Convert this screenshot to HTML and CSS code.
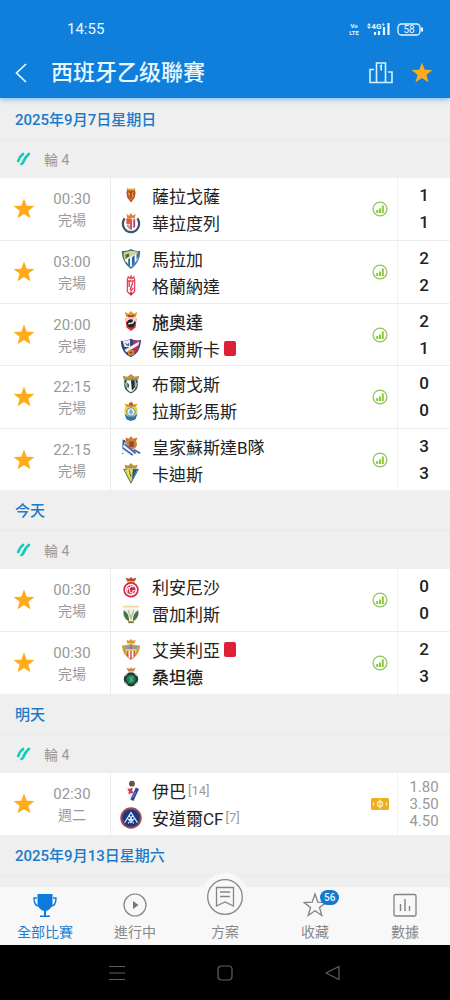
FILE: index.html
```html
<!DOCTYPE html>
<html lang="zh-Hant">
<head>
<meta charset="utf-8">
<meta name="viewport" content="width=device-width, initial-scale=1">
<title>西班牙乙级聯賽</title>
<link rel="stylesheet" href="styles.css">
</head>
<body>
<svg class="sprite" aria-hidden="true">
  <symbol id="star" viewBox="0 0 22 22"><path d="M11 .5l2.700 7.200 7.800.3-6.100 4.800 2.100 7.500-6.500-4.300-6.500 4.300 2.100-7.500L.5 8l7.800-.3z" fill="#ffab19"/></symbol>
  <symbol id="league" viewBox="0 0 16 14"><path d="M7 2C5 3.500 3 6 2.200 9" fill="none" stroke="#17c9b8" stroke-width="2.800" stroke-linecap="round"/><path d="M12.800 2C10.500 4 8.500 7 7.500 9.500 7 11 6.500 11.800 5.500 12" fill="none" stroke="#17c9b8" stroke-width="2.800" stroke-linecap="round"/></symbol>
  <symbol id="stats" viewBox="0 0 16 16"><circle cx="8" cy="8" r="6.900" fill="none" stroke="#8fc653" stroke-width="1.300"/><path d="M5.200 12V9M8 12V7.500M10.800 12V4.500" stroke="#8ac840" stroke-width="2"/></symbol>
  <symbol id="c-zaragoza" viewBox="0 0 24 24"><path d="M9 5h6l1-2 1 6-1 5-4 5-4-5-1-5 1-6z" fill="#c34c25"/><path d="M8 4h8v2H8z" fill="#e2a52a"/><path d="M9 8l3 1 3-2-1 3 1 2-3 5-2-3 1-2-2-1z" fill="#dba02d"/><path d="M12 8v7" stroke="#712c22" stroke-width="1.300"/></symbol>
  <symbol id="c-valladolid" viewBox="0 0 24 24"><path d="M5 7c-5 8 1 15 7 15s12-7 7-15" fill="none" stroke="#3d5665" stroke-width="2.400"/><path d="M7 2l3 2 2-3 2 3 3-2-1 5H8z" fill="#da812d"/><path d="M6.500 7h11v6c0 4-3 6-5.500 7-2.500-1-5.500-3-5.500-7z" fill="#f2e9ed"/><path d="M12 8v11M15.500 8v9" stroke="#a63d86" stroke-width="1.800"/><path d="M7 7h5v6H7z" fill="#e45642"/><path d="M8 14l3 4" stroke="#dd8a3a" stroke-width="2"/></symbol>
  <symbol id="c-malaga" viewBox="0 0 24 24"><path d="M2 3q5 1 10-2 5 3 10 2c0 10-4 15-10 20C6 18 2 13 2 3z" fill="#3c7280"/><path d="M4 5l8-2 8 1-14 11c-2-4-2-7-2-10z" fill="#d6d58a"/><path d="M5 13L20 5l-1 8-7 8z" fill="#fff"/><path d="M9 12v6l2 2v-9zM13 10v10l3-4V8zM18 7v7l2-6V5z" fill="#2468ad"/><path d="M6 7l4-1v3l-4 3z" fill="#526b42"/></symbol>
  <symbol id="c-granada" viewBox="0 0 24 24"><path d="M8 5l1-3 2 2 1-3 1 3 2-2 1 3v13l-4 4-4-4z" fill="#fff" stroke="#df3e51" stroke-width="1.300"/><path d="M8 6.500h8M10 7v6M14 8l-3 8M14.500 14l-3 4" stroke="#df3e51" stroke-width="1.500"/><circle cx="12" cy="20" r="1.500" fill="#c23b49"/></symbol>
  <symbol id="c-ceuta" viewBox="0 0 24 24"><path d="M7 8L5 2l4 2 3-3 3 3 4-2-2 6z" fill="#d6a02c"/><path d="M8 5l4 1 4-1-1 3H9z" fill="#be3e31"/><path d="M6 9h12l-1 10-5 4-5-4z" fill="#d72f38"/><path d="M6.500 9h11l-.5 4H7z" fill="#f5eeee"/><circle cx="12" cy="14.500" r="4.500" fill="#242328"/><path d="M9 15l5-1 1-3" fill="none" stroke="#f4eeee" stroke-width="1.500"/></symbol>
  <symbol id="c-huesca" viewBox="0 0 24 24"><path d="M1 4c6 1 8-1 11-2 4 2 7 3 11 1-1 12-5 16-11 19C5 19 1 13 1 4z" fill="#304482"/><path d="M14 3c3 1 6 1 8 .5-1 8-3 12-7 15z" fill="#b83251"/><path d="M3 5l8-2v8H5z" fill="#eef0f6"/><path d="M5 14L21 5l-1 4L7 17z" fill="#f0f1f8"/><path d="M5 6l3 2 2-2v4l-3-1z" fill="#596681"/><circle cx="12" cy="17" r="3.500" fill="#da8e2c"/><path d="M10 17h4M12 15v4" stroke="#994029"/></symbol>
  <symbol id="c-burgos" viewBox="0 0 24 24"><path d="M4 7L3 3l5 1 4-3 4 3 5-1-1 4z" fill="#b89548"/><path d="M5 7h14c2 8-1 13-7 15C6 20 3 15 5 7z" fill="#215245"/><path d="M7 8h10v7c0 3-3 5-5 6-2-1-5-3-5-6z" fill="#f7f8f4"/><path d="M12 8h4v8l-3 3z" fill="#242c2a"/><path d="M8 10l2 3-1 4-1-2z" fill="#364543"/><path d="M4 10l2 2-1 4M20 10l-2 2 1 4" fill="none" stroke="#9cae93" stroke-width="1.500"/></symbol>
  <symbol id="c-palmas" viewBox="0 0 24 24"><path d="M7 8L5 4l5 1 2-4 2 4 5-1-2 4z" fill="#dc9b26"/><path d="M10 3h4v3h-4z" fill="#b84f35"/><path d="M5 8h14v7l-3 7H8l-3-7z" fill="#f4cd45"/><circle cx="12" cy="13" r="4.500" fill="#eff7fa" stroke="#3285c3"/><path d="M5 15l4 3h6l4-3-2 6-5 2-5-2z" fill="#2774b9"/><path d="M10 12h4M9.500 14h5M12 10v6" stroke="#5890b1"/></symbol>
  <symbol id="c-sociedad" viewBox="0 0 24 24"><path d="M7 8L6 3l4 1 2-3 2 3 5-1-2 5z" fill="#c96b26"/><circle cx="12.500" cy="10" r="6" fill="#c88535"/><path d="M10 7h5v6h-5z" fill="#9c472f"/><path d="M3 5l3 1 1 12-5 3z" fill="#315392"/><path d="M5 8l8 9 7-3 2 6-9 3-12-4z" fill="#f2f6ff"/><path d="M5 10l12 10M3 14l11 8M15 16l7 4" stroke="#405eaa" stroke-width="1.800"/></symbol>
  <symbol id="c-cadiz" viewBox="0 0 24 24"><path d="M6 7l-1-4 4 1 3-3 3 3 4-1-1 4z" fill="#bd912f"/><path d="M4 8h16l-8 15z" fill="#f5d32c" stroke="#28688d"/><path d="M14 8h5l-6 12z" fill="#185895"/><path d="M7 8h7l-3 8z" fill="#f8e564"/><path d="M10 9l2 7" stroke="#5d773d" stroke-width="1.300"/></symbol>
  <symbol id="c-leonesa" viewBox="0 0 24 24"><path d="M8 6L6 2l4 1 2-2 2 2 4-1-2 4z" fill="#b9492d"/><path d="M8 6h8v2H8z" fill="#e4bd42"/><circle cx="12" cy="15" r="7.500" fill="#fff" stroke="#d42749" stroke-width="1.800"/><circle cx="12" cy="15" r="5" fill="#d32848"/><path d="M15 12l-3-1-2 3 1 4 3 1v-3h3M10 12l-2 2v3" fill="none" stroke="#fff" stroke-width="1.100"/></symbol>
  <symbol id="c-leganes" viewBox="0 0 24 24"><path d="M3 3h18v2H3z" fill="#f0d8a4"/><path d="M4 6h16l-3 13-5 3-5-3z" fill="#f2f2dd"/><path d="M4 8c4 2 6 6 6 12-4-2-7-5-6-12zM20 8c-4 2-6 6-6 12 4-2 7-5 6-12z" fill="#477346"/><path d="M9 8l3 9 3-9" fill="none" stroke="#b5bf96" stroke-width="1.500"/><path d="M9 21h6" stroke="#8c6b32" stroke-width="2"/></symbol>
  <symbol id="c-almeria" viewBox="0 0 24 24"><path d="M8 5L7 1l3 1 2-2 2 2 3-1-1 4z" fill="#db9638"/><path d="M2 7c4 0 7 0 10-2 3 2 6 2 10 2-1 8-4 12-10 16C6 19 3 15 2 7z" fill="#d79b3d"/><path d="M5 8h14l-2 5H7z" fill="#78a3b9"/><path d="M7 13h10l-1 5-4 4-4-4z" fill="#fff"/><path d="M8.500 13v6M12 7v15M15.500 13v6" stroke="#d44a3e" stroke-width="1.600"/><path d="M6 12h12" stroke="#f1ca5b" stroke-width="2"/></symbol>
  <symbol id="c-racing" viewBox="0 0 24 24"><path d="M9 6L7 2l4 1 1-2 1 2 4-1-2 4z" fill="#c8874f"/><circle cx="12" cy="14.500" r="7.800" fill="#273832"/><circle cx="12" cy="14.500" r="5" fill="#188353"/><path d="M5 11l3-3M16 8l3 3M5 18l3 3M19 18l-3 3" stroke="#ced1c4" stroke-width="1.500"/><path d="M10 12l4 5M14 11l-3 7" stroke="#88bda1"/></symbol>
  <symbol id="c-eibar" viewBox="0 0 24 24"><circle cx="13" cy="4" r="3.200" fill="#70503a"/><path d="M6 8l5-1 3 10-1 6-4-7z" fill="#f2eef2"/><path d="M9 10l5 4M13 9l-3 6" stroke="#cc3856" stroke-width="2.300"/><path d="M19 9l-6 13" stroke="#294d91" stroke-width="3.800"/><path d="M17 13l-3 6" stroke="#8194ba"/></symbol>
  <symbol id="c-andorra" viewBox="0 0 24 24"><circle cx="12" cy="12" r="11.700" fill="#a4484a"/><circle cx="12" cy="12" r="9.500" fill="#173a87"/><path d="M5 17l7-11 7 11M9 18l3-5 3 5M8 12l4 5 4-5M10 9l4 6M14 9l-4 6" fill="none" stroke="#e3f3ff" stroke-width="1.200"/></symbol>
</svg>

<header class="header">
  <div class="status">
    <time>14:55</time>
    <div class="status-icons">
      <svg width="11" height="14" viewBox="0 0 11 14"><text class="tiny" x="5" y="6">Vo</text><text class="tiny" x="5" y="13">LTE</text></svg>
      <svg width="25" height="14" viewBox="0 0 25 14"><path d="M3 1L1 3.500h4zM3 7L1 4.500h4z" fill="#e6f8ff"/><text class="tiny net" x="12" y="7">4G⁺</text><path d="M9 13v-3M13 13V9M18 13V5M22.500 13V1" stroke="#e6f8ff" stroke-width="2.200"/></svg>
      <svg width="26" height="13" viewBox="0 0 26 13"><rect x="1" y="1" width="22" height="11" rx="3.500" fill="none" stroke="#e6f8ff" stroke-width="1.300"/><path d="M25 4.500v4" stroke="#e6f8ff" stroke-width="2"/><text class="tiny level" x="12" y="10">58</text></svg>
    </div>
  </div>
  <div class="titlebar">
    <button class="icon-btn back" aria-label="返回"><svg width="12" height="20" viewBox="0 0 12 20"><path d="M11 1L1.500 10 11 19" fill="none" stroke="#e9fbff" stroke-width="1.700"/></svg></button>
    <h1>西班牙乙级聯賽</h1>
    <button class="icon-btn" aria-label="排名"><svg width="24" height="22" viewBox="0 0 24 22"><path d="M7.500 20.500V1h9v19.500M5 7.500H1v13h22V10h-4M11 4.500l1.200-1v5" fill="none" stroke="#d2f4ff" stroke-width="1.600"/></svg></button>
    <button class="icon-btn" aria-label="收藏聯賽"><svg width="22" height="22"><use href="#star"/></svg></button>
  </div>
</header>

<main class="feed">
  <section>
    <h2 class="date">2025年9月7日星期日</h2>
    <div class="round"><svg width="16" height="14"><use href="#league"/></svg>輪 4</div>
    <ul class="matches">
      <li class="match">
        <button class="fav" aria-label="收藏"><svg width="22" height="22"><use href="#star"/></svg></button>
        <div class="when"><span class="clock">00:30</span><span>完場</span></div>
        <div class="teams"><div class="team"><svg class="crest"><use href="#c-zaragoza"/></svg>薩拉戈薩</div><div class="team"><svg class="crest"><use href="#c-valladolid"/></svg>華拉度列</div></div>
        <div class="info"><svg width="16" height="16"><use href="#stats"/></svg></div>
        <div class="score"><span>1</span><span>1</span></div>
      </li>
      <li class="match">
        <button class="fav" aria-label="收藏"><svg width="22" height="22"><use href="#star"/></svg></button>
        <div class="when"><span class="clock">03:00</span><span>完場</span></div>
        <div class="teams"><div class="team"><svg class="crest"><use href="#c-malaga"/></svg>馬拉加</div><div class="team"><svg class="crest"><use href="#c-granada"/></svg>格蘭納達</div></div>
        <div class="info"><svg width="16" height="16"><use href="#stats"/></svg></div>
        <div class="score"><span>2</span><span>2</span></div>
      </li>
      <li class="match">
        <button class="fav" aria-label="收藏"><svg width="22" height="22"><use href="#star"/></svg></button>
        <div class="when"><span class="clock">20:00</span><span>完場</span></div>
        <div class="teams"><div class="team winner"><svg class="crest"><use href="#c-ceuta"/></svg>施奧達</div><div class="team"><svg class="crest"><use href="#c-huesca"/></svg>侯爾斯卡<i class="red-card"></i></div></div>
        <div class="info"><svg width="16" height="16"><use href="#stats"/></svg></div>
        <div class="score"><span>2</span><span>1</span></div>
      </li>
      <li class="match">
        <button class="fav" aria-label="收藏"><svg width="22" height="22"><use href="#star"/></svg></button>
        <div class="when"><span class="clock">22:15</span><span>完場</span></div>
        <div class="teams"><div class="team"><svg class="crest"><use href="#c-burgos"/></svg>布爾戈斯</div><div class="team"><svg class="crest"><use href="#c-palmas"/></svg>拉斯彭馬斯</div></div>
        <div class="info"><svg width="16" height="16"><use href="#stats"/></svg></div>
        <div class="score"><span>0</span><span>0</span></div>
      </li>
      <li class="match">
        <button class="fav" aria-label="收藏"><svg width="22" height="22"><use href="#star"/></svg></button>
        <div class="when"><span class="clock">22:15</span><span>完場</span></div>
        <div class="teams"><div class="team"><svg class="crest"><use href="#c-sociedad"/></svg>皇家蘇斯達B隊</div><div class="team"><svg class="crest"><use href="#c-cadiz"/></svg>卡迪斯</div></div>
        <div class="info"><svg width="16" height="16"><use href="#stats"/></svg></div>
        <div class="score"><span>3</span><span>3</span></div>
      </li>
    </ul>
  </section>
  <section>
    <h2 class="date">今天</h2>
    <div class="round"><svg width="16" height="14"><use href="#league"/></svg>輪 4</div>
    <ul class="matches">
      <li class="match">
        <button class="fav" aria-label="收藏"><svg width="22" height="22"><use href="#star"/></svg></button>
        <div class="when"><span class="clock">00:30</span><span>完場</span></div>
        <div class="teams"><div class="team"><svg class="crest"><use href="#c-leonesa"/></svg>利安尼沙</div><div class="team"><svg class="crest"><use href="#c-leganes"/></svg>雷加利斯</div></div>
        <div class="info"><svg width="16" height="16"><use href="#stats"/></svg></div>
        <div class="score"><span>0</span><span>0</span></div>
      </li>
      <li class="match">
        <button class="fav" aria-label="收藏"><svg width="22" height="22"><use href="#star"/></svg></button>
        <div class="when"><span class="clock">00:30</span><span>完場</span></div>
        <div class="teams"><div class="team"><svg class="crest"><use href="#c-almeria"/></svg>艾美利亞<i class="red-card"></i></div><div class="team winner"><svg class="crest"><use href="#c-racing"/></svg>桑坦德</div></div>
        <div class="info"><svg width="16" height="16"><use href="#stats"/></svg></div>
        <div class="score"><span>2</span><span>3</span></div>
      </li>
    </ul>
  </section>
  <section>
    <h2 class="date">明天</h2>
    <div class="round"><svg width="16" height="14"><use href="#league"/></svg>輪 4</div>
    <ul class="matches">
      <li class="match">
        <button class="fav" aria-label="收藏"><svg width="22" height="22"><use href="#star"/></svg></button>
        <div class="when"><span class="clock">02:30</span><span>週二</span></div>
        <div class="teams"><div class="team"><svg class="crest"><use href="#c-eibar"/></svg>伊巴<small>[14]</small></div><div class="team"><svg class="crest"><use href="#c-andorra"/></svg>安道爾CF<small>[7]</small></div></div>
        <div class="info"><svg width="18" height="12" viewBox="0 0 18 12"><rect width="18" height="12" rx="1.500" fill="#ecae22"/><circle cx="9" cy="6" r="2.600" fill="none" stroke="#fff1bb" stroke-width="1.200"/><path d="M9 1.500v9M2.500 4.500v3M15.500 4.500v3" stroke="#fff1bb" stroke-width="1.200"/></svg></div>
        <div class="odds"><span>1.80</span><span>3.50</span><span>4.50</span></div>
      </li>
    </ul>
  </section>
  <section><h2 class="date">2025年9月13日星期六</h2></section>
</main>

<nav class="tabs">
  <a class="tab active" href="#all"><svg width="24" height="26" viewBox="0 0 24 26"><path d="M4.500 2h15v9c0 4-3 7-6.500 8v4.500h4V25H7v-1.500h4V19c-3.500-1-6.500-4-6.500-8z" fill="#0d7bdc"/><path d="M4 6H1c0 4 1 8 5 8M20 6h3c0 4-1 8-5 8" fill="none" stroke="#0d7bdc" stroke-width="1.400"/></svg><span>全部比賽</span></a>
  <a class="tab" href="#live"><svg width="24" height="26" viewBox="0 0 24 26"><circle cx="12" cy="13" r="11" fill="none" stroke="#828282" stroke-width="1.200"/><path d="M10 9l5.500 4-5.500 4z" fill="#777"/></svg><span>進行中</span></a>
  <a class="tab center" href="#plan"><i class="bump"><svg width="36" height="36" viewBox="0 0 36 36"><circle cx="18" cy="18" r="17.300" fill="none" stroke="#858585" stroke-width="1.300"/><path d="M9.500 8.500h17v18.500l-8.500-4-8.500 4zM13 13h10M13 17.500h10" fill="none" stroke="#858585" stroke-width="1.300"/></svg></i><span>方案</span></a>
  <a class="tab" href="#favorites"><svg width="24" height="26" viewBox="0 0 24 26"><path d="M12 2l2.800 8.200 8.200.3-6.500 5 2.300 8-6.800-4.700-6.800 4.700 2.300-8-6.500-5 8.200-.3z" fill="none" stroke="#828282" stroke-width="1.300"/></svg><b class="badge">56</b><span>收藏</span></a>
  <a class="tab" href="#data"><svg width="24" height="26" viewBox="0 0 24 26"><rect x="1" y="2.500" width="22" height="21.500" rx="1.500" fill="none" stroke="#828282" stroke-width="1.300"/><path d="M7.500 19v-7M12 19V7M16.500 19v-5" stroke="#828282" stroke-width="1.400"/></svg><span>數據</span></a>
</nav>

<footer class="system">
  <button class="icon-btn" aria-label="最近"><svg width="16" height="16" viewBox="0 0 16 16"><path d="M0 1.500h16M0 8h16M0 14.500h16" stroke="#606060" stroke-width="1.200"/></svg></button>
  <button class="icon-btn" aria-label="主頁"><svg width="16" height="16" viewBox="0 0 16 16"><rect x="1" y="1" width="14" height="14" rx="3.500" fill="none" stroke="#606060" stroke-width="1.200"/></svg></button>
  <button class="icon-btn" aria-label="上一頁"><svg width="16" height="16" viewBox="0 0 16 16"><path d="M14 1.500v13L1 8z" fill="none" stroke="#606060" stroke-width="1.200" stroke-linejoin="round"/></svg></button>
</footer>
</body>
</html>
```

FILE: styles.css
```css
* { box-sizing: border-box; }

body {
  margin: 0;
  height: 100vh;
  display: flex;
  flex-direction: column;
  background: #efefef;
  color: #222;
  font-family: Roboto, "Noto Sans CJK TC", sans-serif;
}

svg { display: block; flex: none; }
.sprite { position: absolute; width: 0; height: 0; }

button { font: inherit; color: inherit; background: none; border: 0; padding: 0; }
.icon-btn { display: flex; }

/* Header */
.header {
  flex: none;
  background: #107edb;
  color: #e6f8ff;
  box-shadow: 0 1px 6px #6ab0ee;
  z-index: 1;
}
.status {
  display: flex;
  justify-content: space-between;
  align-items: center;
  height: 58px;
  padding: 0 27px 0 67px;
  font-size: 15px;
}
.status-icons { display: flex; align-items: center; gap: 6px; }
.tiny { font-size: 6px; font-weight: 700; fill: #e6f8ff; text-anchor: middle; }
.net { font-size: 8px; }
.level { font-size: 10px; font-weight: 400; }
.titlebar {
  display: flex;
  align-items: center;
  gap: 18px;
  height: 40px;
  padding: 0 17px 10px 15px;
}
.titlebar h1 {
  flex: 1;
  margin: 0 0 0 6px;
  font-size: 22px;
  font-weight: 500;
  line-height: 30px;
}

/* Match list */
.feed { flex: 1; min-height: 0; overflow: hidden; padding-top: 1px; }
.date {
  margin: 0;
  height: 41px;
  padding-left: 15px;
  border-bottom: 1px solid #e8e8e8;
  color: #1c7ac9;
  font-size: 15px;
  font-weight: 500;
  line-height: 43px;
}
.round {
  display: flex;
  align-items: center;
  gap: 12px;
  height: 38px;
  padding-left: 16px;
  color: #9a9a9a;
  font-size: 14px;
}
.matches { margin: 0; padding: 0; list-style: none; background: #fff; }
.match {
  display: grid;
  grid-template-columns: 48px 62px 1fr 34px 53px;
  height: 62px;
}
.match:nth-child(even) { height: 63px; }
.match + .match { border-top: 1px solid #ededed; }
.fav, .info { display: flex; align-items: center; justify-content: center; }
.when, .score, .odds, .teams {
  display: flex;
  flex-direction: column;
  justify-content: center;
}
.when {
  align-items: center;
  padding: 2px 14px 0 0;
  color: #999;
  font-size: 14px;
  line-height: 21px;
}
.clock { font-size: 15px; }
.teams { padding-left: 9px; border-left: 1px solid #ededed; }
.team {
  display: flex;
  align-items: center;
  height: 27px;
  font-size: 17px;
  white-space: nowrap;
}
.crest { width: 22px; height: 22px; margin-right: 10px; }
.winner { font-weight: 500; }
.team small { margin-left: 2px; color: #999; font-size: 13px; }
.red-card { width: 12px; height: 15px; margin-left: 4px; border-radius: 2px; background: #dc2036; }
.score, .odds { align-items: center; border-left: 1px solid #f0f0f0; }
.score { font-size: 17px; font-weight: 500; line-height: 27px; }
.odds { color: #999; font-size: 15px; line-height: 17px; }

/* Bottom tabs */
.tabs {
  flex: none;
  display: grid;
  grid-template-columns: repeat(5, 1fr);
  height: 58px;
  background: #f8f8f8;
}
.tab {
  position: relative;
  display: flex;
  flex-direction: column;
  align-items: center;
  justify-content: flex-end;
  gap: 3px;
  padding-bottom: 2px;
  color: #888;
  font-size: 14px;
  line-height: 22px;
  text-decoration: none;
}
.active { color: #1c7ed2; }
.bump {
  position: absolute;
  top: -14px;
  padding: 6px;
  border-radius: 50%;
  background: #f8f8f8;
}
.badge {
  position: absolute;
  top: 3px;
  left: 50%;
  margin-left: 5px;
  padding: 0 4px;
  border-radius: 8px;
  background: #1677cb;
  color: #e8f8ff;
  font-size: 10px;
  font-weight: 500;
  line-height: 15px;
}

/* System navigation */
.system {
  flex: none;
  display: flex;
  align-items: center;
  justify-content: center;
  gap: 92px;
  height: 55px;
  background: #000;
}
```
